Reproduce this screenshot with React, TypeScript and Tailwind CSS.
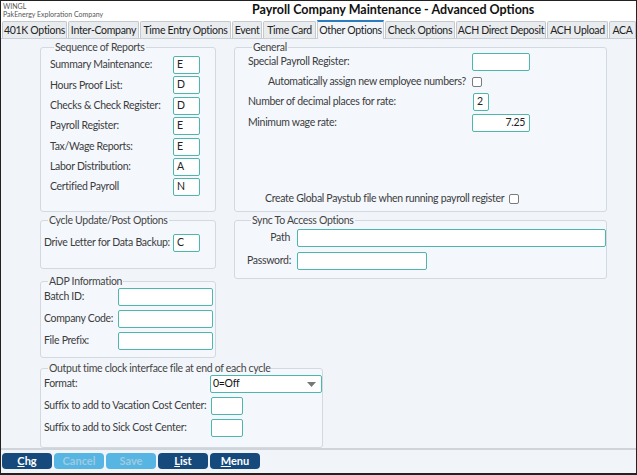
import React from "react";

const F = { fontFamily: "Lato, 'Open Sans', sans-serif" };

function Box({ className = "", children }: { className?: string; children?: React.ReactNode }) {
  return (
    <div
      className={
        "h-[18px] shrink-0 border-[1.5px] border-[#4db6ad] rounded-[2px] bg-white text-[10.5px] text-[#222] pl-[3px] leading-[15px] " +
        className
      }
    >
      {children}
    </div>
  );
}

function Check() {
  return <div className="w-[10px] h-[10px] shrink-0 border border-[#7a7a7a] rounded-[2px] bg-white" />;
}

function Group({
  title,
  className = "",
  children,
}: {
  title: string;
  className?: string;
  children?: React.ReactNode;
}) {
  return (
    <fieldset className={"border border-[#d3d9e0] rounded-[3px] bg-[#f4f8fc] " + className}>
      <legend className="ml-[4px] px-[1px] text-[10.5px] leading-[14px] text-[#444] whitespace-nowrap">{title}</legend>
      {children}
    </fieldset>
  );
}

const tabs: [string, string][] = [
  ["401K Options", "w-[65px]"],
  ["Inter-Company", "w-[71px]"],
  ["Time Entry Options", "w-[91px]"],
  ["Event", "w-[30px]"],
  ["Time Card", "w-[53px]"],
  ["Other Options", "w-[67px]"],
  ["Check Options", "w-[70px]"],
  ["ACH Direct Deposit", "w-[90px]"],
  ["ACH Upload", "w-[61px]"],
  ["ACA", "w-[27px]"],
];

const L = "text-[10.5px] whitespace-nowrap shrink-0";

export default function App() {
  const seq: [string, string][] = [
    ["Summary Maintenance:", "E"],
    ["Hours Proof List:", "D"],
    ["Checks & Check Register:", "D"],
    ["Payroll Register:", "E"],
    ["Tax/Wage Reports:", "E"],
    ["Labor Distribution:", "A"],
    ["Certified Payroll", "N"],
  ];
  return (
    <div style={F} className="w-[637px] h-[475px] bg-[#f1f5fa] border border-[#222] border-b-[2px] flex flex-col overflow-hidden text-[#3c3c3c] tracking-[-0.3px]">
      {/* header */}
      <div className="h-[20px] bg-white flex items-start shrink-0 tracking-normal">
        <div className="w-[251px] pl-[2px] pt-[1px] text-[7px] leading-[8px] text-[#555] whitespace-nowrap">
          <div>WINGL</div>
          <div>PakEnergy Exploration Company</div>
        </div>
        <div className="text-[12.5px] font-bold text-[#111] leading-[18px] whitespace-nowrap">
          Payroll Company Maintenance - Advanced Options
        </div>
      </div>
      {/* tabs */}
      <div className="h-[18px] bg-white flex items-end gap-[1px] pl-[1px] shrink-0 border-b border-[#c9ced4]">
        {tabs.map(([t, w]) =>
          t === "Other Options" ? (
            <div
              key={t}
              className={
                w +
                " shrink-0 h-[19px] -mb-[1px] bg-[#f1f5fa] border-x border-[#c9ced4] border-t-2 border-t-[#2b7bbf] text-[10.5px] leading-[17px] text-center text-[#222] whitespace-nowrap overflow-hidden"
              }
            >
              {t}
            </div>
          ) : (
            <div
              key={t}
              className={
                w +
                " shrink-0 h-[17px] bg-[#e9ecef] border-x border-t border-[#c4c9cf] rounded-t-[2px] text-[10.5px] leading-[17px] text-center text-[#222] whitespace-nowrap overflow-hidden"
              }
            >
              {t}
            </div>
          )
        )}
      </div>
      {/* body */}
      <div className="flex-1 pl-[39px] pt-[1px]">
        <div className="flex gap-[18px]">
          <div className="w-[176px] flex flex-col">
            <Group title="Sequence of Reports" className="h-[172px] pl-[9px] pt-[2px]">
              <div className="flex flex-col gap-[2.4px]">
                {seq.map(([l, v]) => (
                  <div key={l} className="flex items-center">
                    <div className={"w-[123px] " + L}>{l}</div>
                    <Box className="w-[27px]">{v}</Box>
                  </div>
                ))}
              </div>
            </Group>
            <Group title="Cycle Update/Post Options" className="mt-[1px] h-[56px] pl-[3px] pt-[7px]">
              <div className="flex items-center">
                <div className={"w-[129px] " + L}>Drive Letter for Data Backup:</div>
                <Box className="w-[27px]">C</Box>
              </div>
            </Group>
            <Group title="ADP Information" className="mt-[5px] h-[84px] pl-[3px] pt-[0px]">
              <div className="flex flex-col gap-[4px]">
                {["Batch ID:", "Company Code:", "File Prefix:"].map((l) => (
                  <div key={l} className="flex items-center">
                    <div className={"w-[74px] " + L}>{l}</div>
                    <Box className="w-[95px]" />
                  </div>
                ))}
              </div>
            </Group>
          </div>
          <div className="w-[373px] flex flex-col">
            <Group title="General" className="h-[172px] pl-[13px]">
              <div className="flex flex-col h-[154px] -mt-[1px]">
                <div className="flex items-center">
                  <div className={"w-[224px] " + L}>Special Payroll Register:</div>
                  <Box className="w-[58px] h-[17px]" />
                </div>
                <div className="flex items-center mt-[3px]">
                  <div className={"w-[224px] text-right pr-[6px] " + L}>Automatically assign new employee numbers?</div>
                  <Check />
                </div>
                <div className="flex items-center mt-[3px]">
                  <div className={"w-[225px] " + L}>Number of decimal places for rate:</div>
                  <Box className="w-[16px] h-[17px]">2</Box>
                </div>
                <div className="flex items-center mt-[3px]">
                  <div className={"w-[224px] " + L}>Minimum wage rate:</div>
                  <Box className="w-[58px] text-right pr-[4px]">7.25</Box>
                </div>
                <div className="mt-auto flex items-center pl-[17px] gap-[5px]">
                  <div className={L}>Create Global Paystub file when running payroll register</div>
                  <Check />
                </div>
              </div>
            </Group>
            <Group title="Sync To Access Options" className="mt-[1px] h-[66px] pl-[12px] pt-[2px]">
              <div className="flex flex-col gap-[5px]">
                <div className="flex items-center">
                  <div className={"w-[50px] text-right pr-[7px] " + L}>Path</div>
                  <Box className="w-[309px] h-[17px]" />
                </div>
                <div className="flex items-center">
                  <div className={"w-[50px] text-right pr-[6px] " + L}>Password:</div>
                  <Box className="w-[130px]" />
                </div>
              </div>
            </Group>
          </div>
        </div>
        <Group title="Output time clock interface file at end of each cycle" className="mt-[3px] w-[283px] h-[87px] pl-[3px]">
          <div className="flex flex-col gap-[4px]">
            <div className="flex items-center">
              <div className={"w-[166px] " + L}>Format:</div>
              <div className="w-[112px] h-[18px] shrink-0 border-[1.5px] border-[#4db6ad] rounded-[2px] bg-white flex items-center justify-between pl-[2px] pr-[5px] text-[10.5px] text-[#111]">
                <span>0=Off</span>
                <svg width="9" height="5" viewBox="0 0 9 5">
                  <path d="M0 0 L9 0 L4.5 5 Z" fill="#777" />
                </svg>
              </div>
            </div>
            <div className="flex items-center">
              <div className={"w-[167px] " + L}>Suffix to add to Vacation Cost Center:</div>
              <Box className="w-[32px]" />
            </div>
            <div className="flex items-center">
              <div className={"w-[167px] " + L}>Suffix to add to Sick Cost Center:</div>
              <Box className="w-[32px]" />
            </div>
          </div>
        </Group>
      </div>
      {/* footer */}
      <div className="h-[25px] shrink-0 border-t-2 border-[#cfd4da] flex items-start gap-[2px] pl-[1px] pt-[3px] tracking-normal">
        {[
          ["C", "hg", true],
          ["", "Cancel", false],
          ["", "Save", false],
          ["L", "ist", true],
          ["M", "enu", true],
        ].map(([u, rest, on], i) => (
          <div
            key={i}
            className={
              "w-[50px] h-[16px] rounded-[4px] text-[11px] font-bold leading-[16px] text-center " +
              (on ? "bg-[#174a7c] text-white" : "bg-[#56b5e3] text-[#9fcbe0]")
            }
          >
            {u ? <span className="underline">{u as string}</span> : null}
            {rest as string}
          </div>
        ))}
      </div>
    </div>
  );
}
